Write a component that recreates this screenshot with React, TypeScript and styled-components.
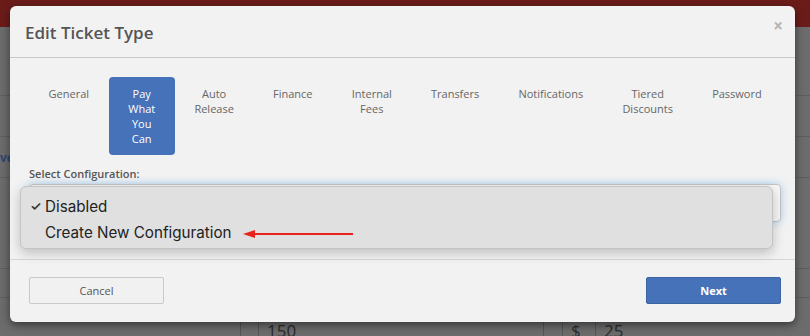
import React from "react"
import styled, { createGlobalStyle } from "styled-components"

const GlobalStyle = createGlobalStyle`
  html, body {
    margin: 0;
    padding: 0;
  }
  body {
    width: 810px;
    height: 336px;
    overflow: hidden;
    font-family: "Open Sans", "Liberation Sans", sans-serif;
  }
`

const Page = styled.div`
  position: relative;
  width: 810px;
  height: 336px;
  overflow: hidden;
  background: #6c6c6c;
  display: flex;
  flex-direction: column;
`

const TopBar = styled.div`
  height: 27px;
  background: #6b1c19;
  flex-shrink: 0;
`

const PageRow = styled.div<{ $h: number }>`
  height: ${(p) => p.$h}px;
  border-bottom: 1px solid #5e5e5e;
  flex-shrink: 0;
  display: flex;
  align-items: center;
  font-size: 12px;
  font-weight: 700;
  color: #2c4670;
`

const InputRow = styled.div`
  margin-top: auto;
  height: 16px;
  display: flex;
  font-family: "Open Sans", sans-serif;
  font-size: 17px;
  color: #2b2b2b;
  line-height: 22px;
`

const Cell = styled.div<{ $w: number; $line?: boolean }>`
  width: ${(p) => p.$w}px;
  flex-shrink: 0;
  border-left: ${(p) => (p.$line ? "1px solid #555" : "none")};
  padding-left: ${(p) => (p.$line ? 8 : 0)}px;
  box-sizing: border-box;
  overflow: hidden;
`

const Modal = styled.div`
  position: absolute;
  top: 6px;
  left: 10px;
  width: 785px;
  height: 316px;
  background: #f2f2f2;
  border-radius: 6px;
  box-shadow: 0 3px 9px rgba(0, 0, 0, 0.5);
  display: flex;
  flex-direction: column;
  box-sizing: border-box;
`

const Header = styled.div`
  height: 52px;
  border-bottom: 1px solid #c9c9c9;
  display: flex;
  align-items: center;
  justify-content: space-between;
  padding: 0 12px 0 15px;
  box-sizing: border-box;
  flex-shrink: 0;
`

const Title = styled.h4`
  margin: 0;
  font-size: 17px;
  font-weight: 600;
  color: #555;
  padding-top: 2px;
`

const Close = styled.span`
  font-size: 17px;
  font-weight: 700;
  color: #b4b4b4;
  line-height: 1;
  margin-top: -13px;
`

const Body = styled.div`
  padding: 19px 14px 0 19px;
  height: 201px;
  box-sizing: border-box;
  flex-shrink: 0;
`

const Tabs = styled.ul`
  list-style: none;
  margin: 0;
  padding: 0;
  display: flex;
`

const Tab = styled.li<{ $active?: boolean }>`
  width: min-content;
  padding: 9px 19.6px;
  font-size: 11px;
  line-height: 15px;
  text-align: center;
  border-radius: 4px;
  color: ${(p) => (p.$active ? "#fff" : "#666")};
  background: ${(p) => (p.$active ? "#4572b8" : "transparent")};
`

const Label = styled.label`
  display: block;
  margin-top: 11px;
  font-size: 11px;
  font-weight: 600;
  color: #555;
  line-height: 15px;
`

const SelectWrap = styled.div`
  position: relative;
  margin-top: 3px;
`

const SelectBox = styled.div`
  height: 38px;
  border: 1px solid #c4c4c4;
  border-radius: 4px;
  background: #f6f6f6;
  box-shadow: 0 0 8px rgba(102, 175, 233, 0.55);
  box-sizing: border-box;
`

const Popup = styled.div`
  position: absolute;
  top: 2px;
  left: -9px;
  width: 753px;
  height: 63px;
  background: #e0e0e0;
  border: 1px solid #c4c4c4;
  border-radius: 6px;
  box-shadow: 0 4px 12px rgba(0, 0, 0, 0.22);
  box-sizing: border-box;
  padding-top: 6px;
  font-family: Inter, "Noto Sans", sans-serif;
  font-size: 15.2px;
  color: #222;
`

const Option = styled.div`
  height: 26px;
  display: flex;
  align-items: center;
  padding-left: 9px;
`

const Check = styled.span`
  width: 15px;
  font-size: 13px;
  font-weight: 600;
  color: #333;
`

const Arrow = styled.svg`
  margin-left: 11px;
  margin-top: 3px;
`

const Footer = styled.div`
  border-top: 1px solid #d6d6d6;
  display: flex;
  justify-content: space-between;
  padding: 17px 14px 0 19px;
`

const Button = styled.button<{ $primary?: boolean }>`
  width: 135px;
  height: 27px;
  border-radius: 2px;
  font-family: "Open Sans", sans-serif;
  font-size: 11px;
  font-weight: ${(p) => (p.$primary ? 700 : 400)};
  color: ${(p) => (p.$primary ? "#fff" : "#555")};
  background: ${(p) => (p.$primary ? "#4572b8" : "#f1f1f1")};
  border: 1px solid ${(p) => (p.$primary ? "#3b64a3" : "#c9c9c9")};
  padding: 0;
`

const tabs = [
  "General",
  "Pay What You Can",
  "Auto Release",
  "Finance",
  "Internal Fees",
  "Transfers",
  "Notifications",
  "Tiered Discounts",
  "Password",
]

export default function App() {
  return (
    <>
      <GlobalStyle />
      <Page>
        <TopBar />
        <PageRow $h={68} />
        <PageRow $h={40} />
        <PageRow $h={40}>ve</PageRow>
        <PageRow $h={90} />
        <PageRow $h={28} />
        <InputRow>
          <Cell $w={240} />
          <Cell $w={18} $line />
          <Cell $w={285} $line>150</Cell>
          <Cell $w={19} $line />
          <Cell $w={33} $line>$</Cell>
          <Cell $w={60} $line>25</Cell>
        </InputRow>

        <Modal>
          <Header>
            <Title>Edit Ticket Type</Title>
            <Close>×</Close>
          </Header>
          <Body>
            <Tabs>
              {tabs.map((t) => (
                <Tab key={t} $active={t === "Pay What You Can"}>
                  {t}
                </Tab>
              ))}
            </Tabs>
            <Label>Select Configuration:</Label>
            <SelectWrap>
              <SelectBox />
              <Popup>
                <Option>
                  <Check>✓</Check>
                  Disabled
                </Option>
                <Option>
                  <Check />
                  Create New Configuration
                  <Arrow width="110" height="10" viewBox="0 0 110 10">
                    <line x1="8" y1="5" x2="110" y2="5" stroke="#e8231e" strokeWidth="2" />
                    <polygon points="0,5 12,1 12,9" fill="#e8231e" />
                  </Arrow>
                </Option>
              </Popup>
            </SelectWrap>
          </Body>
          <Footer>
            <Button>Cancel</Button>
            <Button $primary>Next</Button>
          </Footer>
        </Modal>
      </Page>
    </>
  )
}
